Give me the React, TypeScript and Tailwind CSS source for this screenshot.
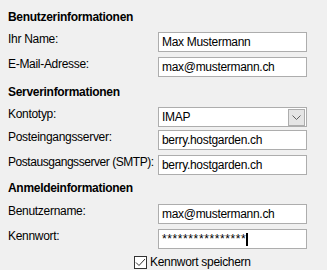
import React from 'react';

const font = { fontFamily: '"Segoe UI", "Liberation Sans", Arial, sans-serif' };

const Field: React.FC<{ label: string; value: string; mt?: string; tight?: boolean }> = ({ label, value, mt = 'mt-[5px]', tight }) => (
  <div className={`flex items-start ${mt}`}>
    <label className={`w-[150px] shrink-0 whitespace-nowrap text-[12px] leading-[14px] text-black ${tight ? 'tracking-[-0.45px]' : 'tracking-[-0.3px]'}`}>{label}</label>
    <div className="w-[149px] h-[20px] border border-[#adadad] bg-white flex items-center px-[3px] text-[12px] tracking-[-0.3px] text-black">
      {value}
    </div>
  </div>
);

const App: React.FC = () => {
  return (
    <div className="w-[327px] h-[270px] bg-[#f0f0f0] px-2 overflow-hidden" style={font}>
      {/* Benutzerinformationen */}
      <h2 className="pt-[9px] text-[12px] leading-4 font-bold tracking-[-0.3px] text-black">Benutzerinformationen</h2>
      <Field label="Ihr Name:" value="Max Mustermann" mt="mt-[7px]" />
      <Field label="E-Mail-Adresse:" value="max@mustermann.ch" />

      {/* Serverinformationen */}
      <h2 className="mt-[7px] text-[12px] leading-4 font-bold tracking-[-0.3px] text-black">Serverinformationen</h2>
      <div className="flex items-start mt-[7px]">
        <label className="w-[150px] shrink-0 text-[12px] leading-[14px] tracking-[-0.3px] text-black">Kontotyp:</label>
        <div className="w-[149px] h-[20px] border border-[#adadad] bg-white flex items-center justify-between pl-[3px] pr-px text-[12px] tracking-[-0.3px] text-black">
          <span>IMAP</span>
          <span className="w-[17px] h-[17px] border border-[#adadad] bg-[#e5e5e5] flex items-center justify-center">
            <svg width="9" height="5" viewBox="0 0 9 5" fill="none">
              <path d="M0.5 0.5 L4.5 4.5 L8.5 0.5" stroke="#606060" strokeWidth="1" />
            </svg>
          </span>
        </div>
      </div>
      <Field label="Posteingangsserver:" value="berry.hostgarden.ch" mt="mt-[3px]" />
      <Field label="Postausgangsserver (SMTP):" value="berry.hostgarden.ch" tight />

      {/* Anmeldeinformationen */}
      <h2 className="mt-[5px] text-[12px] leading-4 font-bold tracking-[-0.3px] text-black">Anmeldeinformationen</h2>
      <Field label="Benutzername:" value="max@mustermann.ch" mt="mt-[8px]" />
      <div className="flex items-start mt-[5px]">
        <label className="w-[150px] shrink-0 text-[12px] leading-[14px] tracking-[-0.3px] text-black">Kennwort:</label>
        <div className="w-[149px] h-[20px] border border-[#adadad] bg-white flex items-center px-[3px] text-[12px] text-black">
          <span className="tracking-[0.6px]">****************</span>
          <span className="w-[2px] h-[13px] bg-black" />
        </div>
      </div>

      {/* Kennwort speichern */}
      <div className="flex items-center mt-[6px] ml-[126px]">
        <span className="w-[13px] h-[13px] border border-[#333333] bg-white flex items-center justify-center">
          <svg width="11" height="9" viewBox="0 0 11 9" fill="none">
            <path d="M1 4.5 L4 7.5 L10 1" stroke="#333333" strokeWidth="1" />
          </svg>
        </span>
        <span className="ml-[3px] text-[12px] leading-[14px] tracking-[-0.3px] text-black">Kennwort speichern</span>
      </div>
    </div>
  );
};

export default App;
